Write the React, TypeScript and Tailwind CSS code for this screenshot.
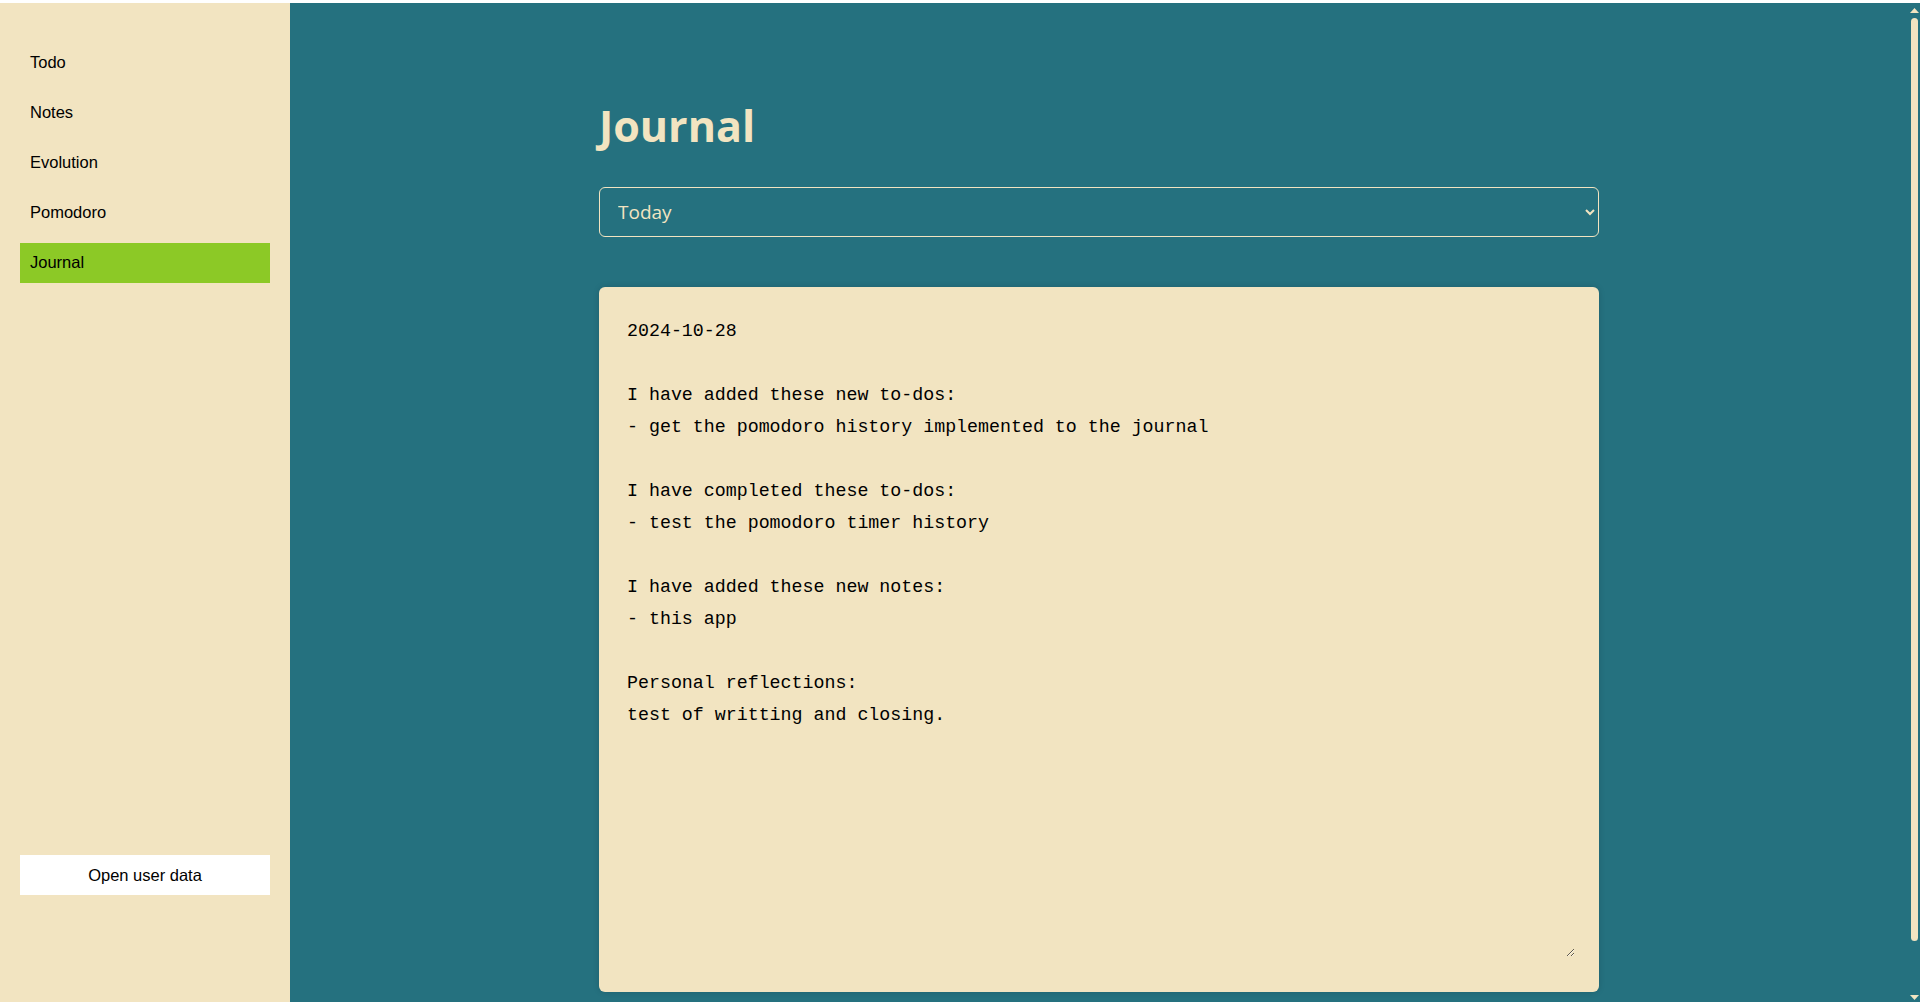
import { useState } from "react";

const navItems = ["Todo", "Notes", "Evolution", "Pomodoro", "Journal"];

const entry = `2024-10-28

I have added these new to-dos:
- get the pomodoro history implemented to the journal

I have completed these to-dos:
- test the pomodoro timer history

I have added these new notes:
- this app

Personal reflections:
test of writting and closing.`;

export default function App() {
  const [active, setActive] = useState("Journal");
  const [text, setText] = useState(entry);

  return (
    <div className="h-screen flex flex-col bg-white">
      <div className="h-[3px] bg-white shrink-0"></div>
      <div className="flex flex-1 min-h-0">
        <aside className="w-[290px] shrink-0 bg-[#f2e4c1] flex flex-col pt-10 px-5 pb-[107px] font-['Liberation_Sans',Arial,sans-serif] text-[16.5px] leading-[38px] text-black">
          <nav className="flex flex-col gap-[10px]">
            {navItems.map((item) => (
              <button
                key={item}
                onClick={() => setActive(item)}
                className={`h-10 pl-[10px] pb-[2px] text-left cursor-pointer ${active === item ? "bg-[#8cc926]" : ""}`}
              >
                {item}
              </button>
            ))}
          </nav>
          <button className="mt-auto h-10 bg-white text-center cursor-pointer">Open user data</button>
        </aside>

        <main className="flex-1 flex min-w-0 bg-[#25717f]">
          <div className="flex-1 overflow-y-auto [scrollbar-width:none]">
            <div className="max-w-[1000px] mx-auto pt-[99px] pb-[60px]">
              <h1 className="font-['Open_Sans',sans-serif] font-bold text-[43px] leading-[48px] text-[#f2e4c1]">Journal</h1>

              <select className="mt-[37px] w-full h-[50px] px-[14px] rounded-md border border-[#f2e4c1] bg-transparent text-[#f2e4c1] text-[19px] font-['Open_Sans',sans-serif] outline-none">
                <option className="text-black">Today</option>
                <option className="text-black">2024-10-27</option>
                <option className="text-black">2024-10-26</option>
              </select>

              <div className="mt-[50px] h-[705px] bg-[#f2e4c1] rounded-md shadow-[0_0_6px_rgba(0,0,0,0.15)] pt-5 pl-7 pr-6 pb-[35px]">
                <textarea
                  value={text}
                  onChange={(e) => setText(e.target.value)}
                  className="block w-full h-full bg-transparent resize-y outline-none pt-[8px] font-['Liberation_Mono','DejaVu_Sans_Mono',monospace] text-[18.3px] leading-[32px] text-black"
                />
              </div>
            </div>
          </div>

          {/* scrollbar look */}
          <div className="w-3 shrink-0 flex flex-col items-center pt-[5px] pb-[2px]">
            <svg width="9" height="5" viewBox="0 0 9 5"><path d="M4.5 0L9 5H0Z" fill="#f2e4c1" /></svg>
            <div className="mt-[5px] flex-1 w-[7px] rounded-full bg-[#f2e4c1]"></div>
            <svg className="mt-[54px]" width="9" height="5" viewBox="0 0 9 5"><path d="M0 0H9L4.5 5Z" fill="#f2e4c1" /></svg>
          </div>
        </main>
      </div>
    </div>
  );
}
